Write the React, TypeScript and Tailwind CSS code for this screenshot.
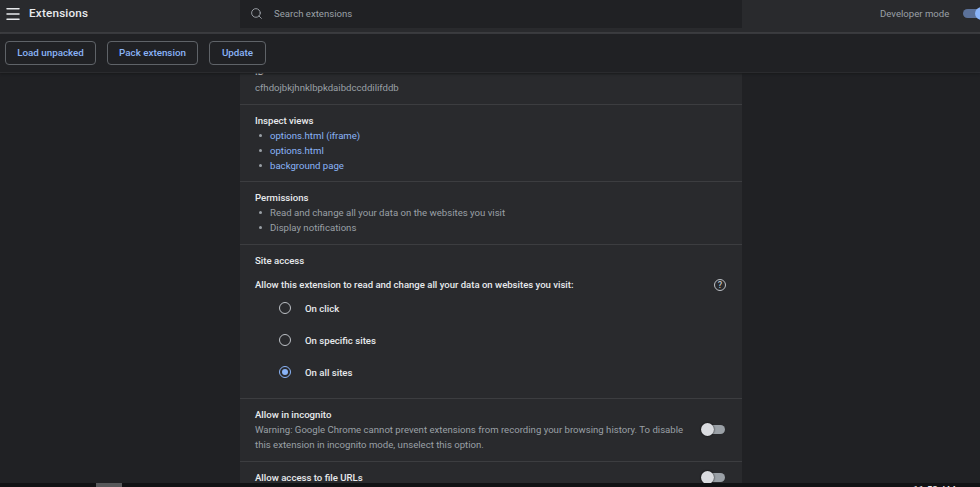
import { Menu, Search } from "lucide-react";

const Toggle = () => (
  <div className="relative w-[20px] h-[9px] rounded-full bg-[#9aa0a6] ml-[3px]">
    <div className="absolute left-[-4px] top-[-2px] w-[13px] h-[13px] rounded-full bg-[#dadce0] shadow-[0_0_2px_#000]" />
  </div>
);

const Radio = ({ label, on = false }: { label: string; on?: boolean }) => (
  <div className="flex items-center h-[32px]">
    <div
      className={
        "w-[12px] h-[12px] rounded-full border-[1.5px] flex items-center justify-center " +
        (on ? "border-[#8ab4f8]" : "border-[#bdc1c6]")
      }
    >
      {on && <div className="w-[6px] h-[6px] rounded-full bg-[#8ab4f8]" />}
    </div>
    <span className="ml-[14px] text-[#e8eaed] font-medium">{label}</span>
  </div>
);

const ToolbarButton = ({ label, width }: { label: string; width: string }) => (
  <button
    className={
      "h-[24px] rounded-[4px] border border-[#5f6368] text-[#8ab4f8] font-medium text-[9.8px] " + width
    }
  >
    {label}
  </button>
);

export default function App() {
  return (
    <div className="h-[487px] w-[980px] overflow-hidden flex flex-col bg-[#202124] font-['Roboto',sans-serif] text-[9.6px] leading-[15px]">
      {/* Top bar */}
      <header className="h-[34px] shrink-0 bg-[#292a2d] flex border-b-2 border-[#3c3d40]">
        <div className="w-[240px] shrink-0 h-[27px] flex items-center">
          <Menu size={18} strokeWidth={2} className="ml-[4px] text-[#e8eaed]" />
          <span className="ml-[7px] text-[#e8eaed] text-[11.7px] font-medium tracking-[0.2px]">Extensions</span>
        </div>
        <div className="w-[502px] shrink-0 h-[28px] bg-[#202124] flex items-center pb-[1px]">
          <Search size={13} strokeWidth={1.75} className="ml-[10px] text-[#9aa0a6]" />
          <span className="ml-[11px] text-[#9aa0a6]">Search extensions</span>
        </div>
        <div className="flex-1 min-w-0 h-[27px] flex items-center">
          <span className="ml-[138px] text-[#9aa0a6] whitespace-nowrap">Developer mode</span>
          <div className="relative ml-[14px] shrink-0 w-[20px] h-[9px] rounded-full bg-[#5b7199]">
            <div className="absolute left-[12px] top-[-2px] w-[13px] h-[13px] rounded-full bg-[#8ab4f8]" />
          </div>
        </div>
      </header>

      {/* Toolbar */}
      <div className="h-[39px] shrink-0 bg-[#202124] flex items-center gap-[11px] pl-[5px] pb-[1px] border-b border-[#2a2b2e] shadow-[0_1px_2px_#18191b] z-10">
        <ToolbarButton label="Load unpacked" width="w-[91px]" />
        <ToolbarButton label="Pack extension" width="w-[91px]" />
        <ToolbarButton label="Update" width="w-[57px]" />
      </div>

      {/* Details card */}
      <main className="flex-1 min-h-0 overflow-hidden">
        <div className="ml-[240px] w-[502px] h-full bg-[#292a2d] text-[#e8eaed] overflow-hidden">
          <section className="h-[32px] px-[15px] border-b border-[#3c3d40]">
            <div className="h-[6px] overflow-hidden flex items-end font-medium">ID</div>
            <div className="mt-[1px] text-[#9aa0a6]">cfhdojbkjhnklbpkdaibdccddilifddb</div>
          </section>

          <section className="h-[77px] px-[15px] pt-[8px] border-b border-[#3c3d40]">
            <div className="font-medium">Inspect views</div>
            <ul className="text-[#8ab4f8]">
              {["options.html (iframe)", "options.html", "background page"].map((l) => (
                <li key={l} className="flex items-center">
                  <span className="w-[3px] h-[3px] rounded-full bg-[#9aa0a6] ml-[4px] mr-[8px]" />
                  {l}
                </li>
              ))}
            </ul>
          </section>

          <section className="h-[63px] px-[15px] pt-[8px] border-b border-[#3c3d40]">
            <div className="font-medium">Permissions</div>
            <ul className="text-[#9aa0a6]">
              {["Read and change all your data on the websites you visit", "Display notifications"].map((l) => (
                <li key={l} className="flex items-center">
                  <span className="w-[3px] h-[3px] rounded-full bg-[#9aa0a6] ml-[4px] mr-[8px]" />
                  {l}
                </li>
              ))}
            </ul>
          </section>

          <section className="h-[154px] px-[15px] pt-[8px] border-b border-[#3c3d40]">
            <div className="font-medium">Site access</div>
            <div className="mt-[9px] flex justify-between items-center pr-[1px] font-medium">
              <span className="text-[9.55px]">Allow this extension to read and change all your data on websites you visit:</span>
              <div className="w-[12px] h-[12px] rounded-full border border-[#bdc1c6] text-[#bdc1c6] text-[9px] leading-[10px] text-center">?</div>
            </div>
            <div className="pl-[24px]">
              <Radio label="On click" />
              <Radio label="On specific sites" />
              <Radio label="On all sites" on />
            </div>
          </section>

          <section className="h-[63px] pl-[15px] pr-[17px] pb-[2px] border-b border-[#3c3d40] flex items-center justify-between">
            <div className="w-[440px]">
              <div className="font-medium">Allow in incognito</div>
              <div className="text-[#9aa0a6]">
                Warning: Google Chrome cannot prevent extensions from recording your browsing history. To disable this extension in incognito mode, unselect this option.
              </div>
            </div>
            <Toggle />
          </section>

          <section className="pl-[15px] pr-[17px] pt-[8px] flex items-center justify-between">
            <div className="font-medium">Allow access to file URLs</div>
            <Toggle />
          </section>
        </div>
      </main>

      {/* Clipped taskbar */}
      <div className="h-[4px] shrink-0 bg-[#111214] flex items-start z-20 overflow-hidden relative">
        <div className="ml-[96px] w-[26px] h-[4px] bg-[#57585a]" />
        <span className="ml-[791px] text-[#e8eaed] text-[10px] leading-[15px]">11:53 AM</span>
      </div>
    </div>
  );
}
